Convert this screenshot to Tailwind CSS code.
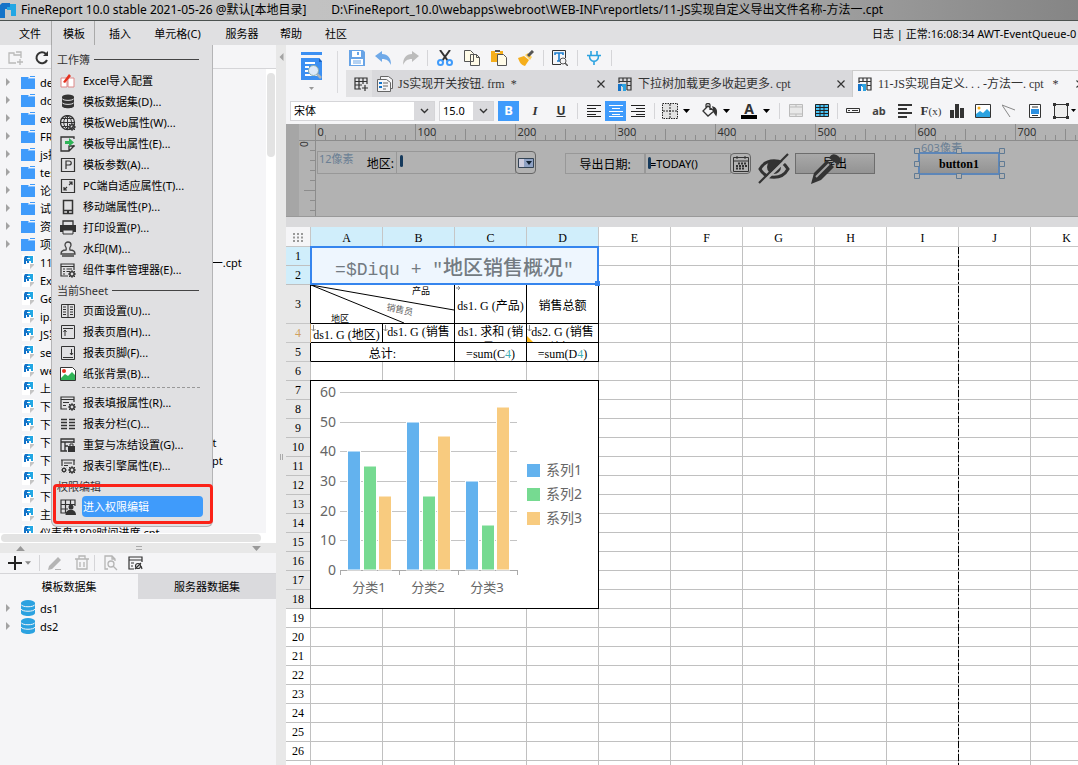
<!DOCTYPE html>
<html lang="zh-CN">
<head>
  <meta charset="UTF-8" />
  <meta name="viewport" content="width=device-width, initial-scale=1.0" />
  <title>FineReport 10.0</title>
  <script src="https://cdn.jsdelivr.net/npm/@tailwindcss/browser@4"></script>
</head>

<body class="h-screen flex flex-col overflow-hidden bg-[#f5f5f7] text-black text-[11px] leading-none font-['Noto_Sans','Noto_Sans_CJK_SC',sans-serif]">

  <!-- shared icons -->
  <svg class="hidden">
    <symbol id="folder" viewBox="0 0 14 13"><path d="M0 1h7l1 1h6v11H0z" fill="#3f9bfb"/><path d="M9 0h5v1H9z" fill="#3f9bfb"/><path d="M7 2.500h7" stroke="#bcdcff" stroke-width=".6"/></symbol>
    <symbol id="file" viewBox="0 0 13 14"><path d="M0 0h12v9l-4 5H0z" fill="#fff"/><path d="M12 9v1l-4 4v-5z" fill="#c4c4c4"/><path d="M3 1h4v7H5V6H4v3H2V3z" fill="#1473c8"/><path d="M6 1h5v7H9V6H6z" fill="#22a7e4"/><path d="M5 3h3v1H5z" fill="#fff"/></symbol>
    <symbol id="db" viewBox="0 0 14 16"><path d="M0 3v10c0 4 14 4 14 0V3z" fill="#2ba2e0"/><ellipse cx="7" cy="3" rx="7" ry="3" fill="#2ba2e0"/><path d="M0 4.500c1 3 13 3 14 0M0 9c1 3 13 3 14 0" fill="none" stroke="#f5f5f7"/></symbol>
    <symbol id="arrow" viewBox="0 0 4 8"><path d="M0 0l4 4-4 4z" fill="#a3a3a3"/></symbol>
    <symbol id="down" viewBox="0 0 7 4"><path d="M0 0h7L3.500 4z" fill="currentColor"/></symbol>
    <symbol id="chev" viewBox="0 0 9 6"><path d="M1 1l3.500 3.500L8 1" fill="none" stroke="#333" stroke-width="1.400"/></symbol>
    <symbol id="close" viewBox="0 0 8 8"><path d="M.5 .5l7 7M7.500 .5l-7 7" stroke="#333" stroke-width="1.200"/></symbol>
    <symbol id="cpt" viewBox="0 0 14 14"><path d="M1 6V1h12v12H9M1 4.500h12M5 1v4M9 1v12M9 8.500h4" fill="none" stroke="#333" stroke-width="1.200"/><path d="M0 7h5v2H3v5H0z" fill="#1473c8"/><path d="M4 7h4v7H5v-4H4z" fill="#2ba2e0"/></symbol>
    <symbol id="gear" viewBox="0 0 8 8"><circle cx="4" cy="4" r="2.200" fill="none" stroke="#333" stroke-width="1.600"/><path d="M4 0v1.500M4 6.500V8M0 4h1.500M6.500 4H8M1 1l1.200 1.200M5.800 5.800L7 7M7 1L5.800 2.200M2.200 5.800L1 7" stroke="#333"/></symbol>
  </svg>

  <!-- title bar -->
  <header class="h-[21px] shrink-0 flex items-center gap-[5px] text-[12px] border-b border-[#4c5250] bg-linear-to-r from-[#c9c9c9] via-[#bdbdbd] to-[#858585] whitespace-pre">
    <svg class="w-4 h-4" viewBox="0 0 16 16"><path d="M2 1h8v6H5v9H0V3z" fill="#1473c8"/><path d="M10 2h6v12h-5V8H7V5h3z" fill="#22a7e4"/></svg>
    <h1>FineReport 10.0 stable 2021-05-26 @默认[本地目录]        D:\FineReport_10.0\webapps\webroot\WEB-INF\reportlets/11-JS实现自定义导出文件名称-方法一.cpt</h1>
  </header>

  <!-- menu bar -->
  <nav class="h-6 shrink-0 flex items-center bg-[#e0e0e2]">
    <button class="h-6 pl-[19px] w-[51px] text-left">文件</button>
    <button class="h-6 w-11 pl-[2px] border-x border-[#aaa]">模板</button>
    <button class="h-6 w-[50px]">插入</button>
    <button class="h-6 w-[65px]">单元格(C)</button>
    <button class="h-6 w-[64px]">服务器</button>
    <button class="h-6 w-[34px]">帮助</button>
    <button class="h-6 w-[56px]">社区</button>
    <p class="ml-auto w-[206px] whitespace-nowrap">日志 | 正常:16:08:34 AWT-EventQueue-0</p>
  </nav>

  <main class="flex-1 min-h-0 flex relative">

    <!-- left side: template tree and data sets -->
    <aside class="w-[276px] shrink-0 flex flex-col">
      <div class="h-6 shrink-0 flex items-center gap-[10px] pl-2 pt-[2px] border-b border-[#d5d5d8]">
        <button aria-label="新建文件夹"><svg class="w-4 h-4" viewBox="0 0 16 16" fill="none" stroke="#b9b9b9" stroke-width="1.300"><path d="M8 13H1V3h5v2h7v3M8 2h5v3M12 9v6M9 12h6"/></svg></button>
        <button aria-label="刷新"><svg class="w-4 h-4" viewBox="0 0 16 16"><path d="M13 10a5.500 5.500 0 1 1-1-6" fill="none" stroke="#333" stroke-width="2"/><path d="M14 1v5H9z" fill="#333"/></svg></button>
      </div>
      <div class="h-[464px] shrink-0 flex">
        <ul id="tree" class="flex-1 min-w-0 pt-1 overflow-hidden whitespace-nowrap"></ul>
        <div class="w-[10px] bg-white pt-1"><div class="mx-px h-[84px] rounded bg-[#e3e3e3]"></div></div>
      </div>
      <div class="h-[10px] shrink-0 bg-white py-px pr-[15px] pl-px"><div class="h-2 rounded-full bg-[#e3e3e3]"></div></div>
      <div class="h-[10px] shrink-0 bg-[#e8e8e8] flex items-center justify-between pl-4 pr-[15px] text-[#999]">
        <svg class="w-[9px] h-[5px] rotate-180"><use href="#down"/></svg>
        <i class="w-[6px] h-1 border-y border-[#aaa]"></i>
        <svg class="w-[9px] h-[5px]"><use href="#down"/></svg>
      </div>
      <div class="h-[21px] shrink-0 flex items-center border-b border-[#d5d5d8]">
        <button class="pl-2 flex items-center gap-[3px] text-[#888]" aria-label="新增"><svg class="w-[14px] h-[14px]" viewBox="0 0 14 14"><path d="M7 0v14M0 7h14" stroke="#222" stroke-width="2"/></svg><svg class="w-[6px] h-1"><use href="#down"/></svg></button>
        <i class="ml-2 w-px h-4 bg-[#d5d5d8]"></i>
        <button class="w-[30px] grid place-items-center" aria-label="编辑"><svg class="w-4 h-4" viewBox="0 0 16 16"><path d="M2 11L11 2l3 3-9 9-4 1zM8 14h6v1H8z" fill="#b5b5b5"/></svg></button>
        <button class="w-[24px] grid place-items-center" aria-label="删除"><svg class="w-4 h-4" viewBox="0 0 16 16" fill="none" stroke="#b5b5b5" stroke-width="1.300"><path d="M1 4h14M3 4v10h10V4M5 4V1h6v3M6 7v5M10 7v5"/></svg></button>
        <i class="w-px h-4 bg-[#d5d5d8]"></i>
        <button class="w-[30px] grid place-items-center" aria-label="预览"><svg class="w-4 h-4" viewBox="0 0 16 16" fill="none" stroke="#b5b5b5" stroke-width="1.300"><path d="M6 14H3V1h7l3 3v2M10 1v3h3"/><circle cx="9" cy="9" r="3"/><path d="M11 11l4 4"/></svg></button>
        <button class="w-5 grid place-items-center" aria-label="连接"><svg class="w-[15px] h-[15px]" viewBox="0 0 15 15" fill="none" stroke="#333" stroke-width="1.200"><path d="M6 13H1V1h13v5M1 4h13M3 7h3M3 10h2"/><circle cx="10" cy="10" r="2.500"/><path d="M7 13l6-6M13 10l1 3"/></svg></button>
      </div>
      <div class="h-[25px] shrink-0 grid grid-cols-2 text-[11px]">
        <button>模板数据集</button>
        <button class="bg-[#dadadd]">服务器数据集</button>
      </div>
      <ul>
        <li class="h-[18px] flex items-center pl-[6px]"><svg class="w-1 h-2"><use href="#arrow"/></svg><svg class="ml-[11px] mr-[5px] w-[14px] h-4"><use href="#db"/></svg>ds1</li>
        <li class="h-[18px] flex items-center pl-[6px]"><svg class="w-1 h-2"><use href="#arrow"/></svg><svg class="ml-[11px] mr-[5px] w-[14px] h-4"><use href="#db"/></svg>ds2</li>
      </ul>
    </aside>

    <!-- splitter -->
    <div class="w-[10px] shrink-0 bg-[#e8e8e8] flex flex-col items-center pt-2">
      <svg class="w-[5px] h-2 rotate-180"><use href="#arrow"/></svg>
      <i class="mt-[393px] w-[3px] h-[6px] border-x border-[#aaa]"></i>
    </div>

    <!-- right side: designer -->
    <section class="flex-1 min-w-0 flex flex-col">
      <div class="h-[52px] shrink-0 flex">
        <button class="w-[51px] shrink-0 flex flex-col items-center pt-[7px] text-[#999]" aria-label="模板预览">
          <svg class="w-[22px] h-[30px]" viewBox="0 0 22 30"><path d="M0 0h21v3H0zM0 6h18l3 3v19H0z" fill="#3b8ff2"/><path d="M18 6l3 4h-3z" fill="#1c5fb8"/><path d="M4 11h10M4 15h4M4 19h3M4 23h12" stroke="#fff" stroke-width="2"/><circle cx="12.500" cy="18.500" r="5" fill="#dce9f8" stroke="#8aa"/><path d="M16 22l4 4" stroke="#a9b4bd" stroke-width="2.500"/></svg>
          <svg class="mt-[5px] w-[5px] h-[3px]"><use href="#down"/></svg>
        </button>
        <i class="w-px h-[42px] mt-[6px] bg-[#dadadd]"></i>
        <div class="flex-1 min-w-0 flex flex-col pl-2">
          <div class="h-[25px] flex items-center *:shrink-0">
            <button class="w-[22px] grid place-items-center" aria-label="保存"><svg class="w-4 h-4" viewBox="0 0 16 16"><path d="M0 0h14l2 2v14H0z" fill="#68a4e6"/><path d="M3 1h9v6H3z" fill="#fff"/><path d="M8 2h2v3H8z" fill="#68a4e6"/><path d="M2 9h12v6H2z" fill="#fff"/><path d="M4 11h8M4 13h8" stroke="#68a4e6"/></svg></button>
            <button class="w-[30px] grid place-items-center" aria-label="撤销"><svg class="w-4 h-[14px]" viewBox="0 0 16 14"><path d="M0 5l7-5v3c6 0 9 4 9 11-2-4-4-6-9-6v3z" fill="#6fa9e8"/></svg></button>
            <button class="w-[25px] grid place-items-center" aria-label="重做"><svg class="w-4 h-[14px]" viewBox="0 0 16 14"><path d="M16 5L9 0v3C3 3 0 7 0 14c2-4 4-6 9-6v3z" fill="#bcbcbc"/></svg></button>
            <i class="mx-1 w-px h-4 bg-[#d5d5d8]"></i>
            <button class="w-[26px] grid place-items-center" aria-label="剪切"><svg class="w-4 h-4" viewBox="0 0 16 16" fill="none"><path d="M3 0l8 11M13 0L5 11" stroke="#333" stroke-width="2"/><circle cx="3.500" cy="12.500" r="2.500" stroke="#3f9bfb" stroke-width="2"/><circle cx="12.500" cy="12.500" r="2.500" stroke="#3f9bfb" stroke-width="2"/></svg></button>
            <button class="w-[27px] grid place-items-center" aria-label="复制"><svg class="w-4 h-4" viewBox="0 0 16 16" fill="#fffbe8" stroke="#555"><path d="M.5 .5h6l3 3v8h-9zM6.500 4.500h6l3 3v8h-9z"/><path d="M12.500 4.500v3h3" fill="none"/></svg></button>
            <button class="w-[27px] grid place-items-center" aria-label="粘贴"><svg class="w-4 h-4" viewBox="0 0 16 16"><path d="M0 1h4v2h5V1h3v11H0z" fill="#f5ae1b"/><path d="M4 0h5v2H4z" fill="#555"/><path d="M6.500 4.500h6l3 3v8h-9z" fill="#fffbe8" stroke="#555"/></svg></button>
            <button class="w-[27px] grid place-items-center" aria-label="格式刷"><svg class="w-4 h-4" viewBox="0 0 16 16"><path d="M0 8l6-2 5 4-4 6c-4-1-5-3-7-8z" fill="#f5ae1b"/><path d="M7 5l5 5 2-3-4-4z" fill="#ffcf5a"/><path d="M10 6l5-5" stroke="#555" stroke-width="3"/></svg></button>
            <i class="ml-1 mr-[2px] w-px h-4 bg-[#d5d5d8]"></i>
            <button class="w-[28px] grid place-items-center" aria-label="查找"><svg class="w-4 h-4" viewBox="0 0 16 16" fill="none"><path d="M9 14.500H.5V.5h13V8" stroke="#333"/><path d="M3 5V3h8v2M7 3v8M5 11h3" stroke="#1e7fd0" stroke-width="1.600"/><circle cx="11" cy="11" r="3" fill="#f5f5f7" stroke="#555"/><path d="M13 13l3 3" stroke="#555" stroke-width="1.500"/></svg></button>
            <i class="ml-[3px] mr-[2px] w-px h-4 bg-[#d5d5d8]"></i>
            <button class="w-[28px] grid place-items-center" aria-label="插件"><svg class="w-[14px] h-[14px]" viewBox="0 0 14 14" fill="none" stroke="#2ba2e0" stroke-width="1.600"><path d="M4 0v4M10 0v4M0 4.500h14M2.500 5c0 7 9 7 9 0M7 10v4"/></svg></button>
            <i class="ml-[3px] w-px h-4 bg-[#d5d5d8]"></i>
          </div>
          <!-- open templates -->
          <div class="h-[27px] flex items-center bg-[#d9d9dc] whitespace-nowrap text-[12px] text-[#333] font-['Liberation_Serif','Noto_Sans_CJK_SC',serif] *:shrink-0">
            <button class="w-[26px] h-full grid place-items-center bg-[#e2e2e4]" aria-label="新建"><svg class="ml-1 w-[14px] h-[14px]" viewBox="0 0 14 14" fill="none" stroke="#333" stroke-width="1.200"><path d="M7 12H1V1h12v6M1 4.500h12M1 8h7M5 1v11M9 1v6M11 8v6M8 11h6"/></svg></button>
            <div class="w-[238px] h-full flex items-center pl-[5px] pr-[5px]">
              <svg class="mr-[5px] w-4 h-4" viewBox="0 0 16 16" fill="#f5f5f7" stroke="#666"><path d="M3.500 .5h8l4 3v9h-12z"/><path d="M.5 3.500h9l4 3v9H.5z"/><path d="M6 7h5M6 10h5M6 13h3"/><path d="M2 6h3v2H2zM2 10h3v2H2z" fill="#1473c8" stroke="none"/></svg>
              JS实现开关按钮.&nbsp;frm&nbsp; *
              <button class="ml-auto" aria-label="关闭"><svg class="w-2 h-2"><use href="#close"/></svg></button>
            </div>
            <div class="w-[242px] h-full flex items-center pl-2 pr-[7px]">
              <svg class="mr-[6px] w-[14px] h-[14px]"><use href="#cpt"/></svg>
              下拉树加载更多收起更多.&nbsp;cpt
              <button class="ml-auto" aria-label="关闭"><svg class="w-2 h-2"><use href="#close"/></svg></button>
            </div>
            <div class="w-[232px] h-full flex items-center pl-[5px] bg-[#f5f5f7] border-l border-t border-[#ccc]">
              <svg class="mr-[6px] w-[14px] h-[14px]"><use href="#cpt"/></svg>
              11-JS实现自定义. . . -方法一.&nbsp;cpt&nbsp;&nbsp; *
              <button class="ml-auto" aria-label="关闭"><svg class="w-2 h-2"><use href="#close"/></svg></button>
            </div>
          </div>
        </div>
      </div>

      <!-- format bar -->
      <div class="h-[27px] shrink-0 flex items-center pl-1 *:shrink-0">
        <label class="relative flex w-[145px] h-5 border border-[#d5d5d8] bg-white" aria-label="字体">
          <select class="w-full pl-[3px] pr-5 appearance-none bg-transparent"><option>宋体</option></select>
          <span class="absolute right-0 inset-y-0 w-5 grid place-items-center bg-[#dadadd] pointer-events-none"><svg class="w-[9px] h-[6px]"><use href="#chev"/></svg></span>
        </label>
        <label class="relative ml-1 flex w-[55px] h-5 border border-[#d5d5d8] bg-white" aria-label="字号">
          <select class="w-full pl-[3px] pr-5 appearance-none bg-transparent"><option>15.0</option></select>
          <span class="absolute right-0 inset-y-0 w-5 grid place-items-center bg-[#dadadd] pointer-events-none"><svg class="w-[9px] h-[6px]"><use href="#chev"/></svg></span>
        </label>
        <button class="ml-1 w-[21px] h-5 bg-[#3f9bfb] text-white font-bold text-[13px]">B</button>
        <button class="ml-[3px] w-[26px] font-bold italic text-[13px] text-[#333] font-['Liberation_Serif',serif]">I</button>
        <button class="w-[26px] font-bold underline text-[12px] text-[#333]">U</button>
        <i class="ml-[3px] mr-[5px] w-px h-4 bg-[#d5d5d8]"></i>
        <button class="w-[22px] grid place-items-center" aria-label="左对齐"><svg class="w-[14px] h-3" viewBox="0 0 14 12" stroke="#222"><path d="M0 .5h14M0 3.500h9M0 6.500h14M0 9.500h9M0 11.500h14"/></svg></button>
        <button class="w-[21px] h-5 bg-[#3f9bfb] grid place-items-center" aria-label="居中"><svg class="w-[14px] h-3" viewBox="0 0 14 12" stroke="#fff"><path d="M0 .5h14M3 3.500h8M0 6.500h14M3 9.500h8M0 11.500h14"/></svg></button>
        <button class="w-[23px] grid place-items-center" aria-label="右对齐"><svg class="w-[14px] h-3" viewBox="0 0 14 12" stroke="#222"><path d="M0 .5h14M5 3.500h9M0 6.500h14M5 9.500h9M0 11.500h14"/></svg></button>
        <i class="ml-[5px] mr-[7px] w-px h-4 bg-[#d5d5d8]"></i>
        <button class="flex items-center gap-[5px]" aria-label="边框"><svg class="w-4 h-4" viewBox="0 0 16 16"><path d="M.5 .5h15v15H.5z" fill="#e3e3e3" stroke="#222" stroke-dasharray="1.500 1"/><path d="M8 1v14M1 8h14" stroke="#222" stroke-dasharray="2 1"/></svg><svg class="w-[7px] h-1"><use href="#down"/></svg></button>
        <button class="ml-3 flex items-center gap-[5px]" aria-label="填充色"><svg class="w-4 h-4" viewBox="0 0 16 16" fill="none" stroke="#333" stroke-width="1.300"><path d="M6 3l6 5-6 5-5-5zM4 6V2c0-2 4-2 4 0v5"/><path d="M11 4c3 1 4 4 3 8l-2-3z" fill="#333"/></svg><svg class="w-[7px] h-1"><use href="#down"/></svg></button>
        <button class="ml-[11px] flex items-center gap-[6px]" aria-label="字体颜色"><span class="w-4 h-4 border-b-4 border-black text-[14px] leading-[11px] font-bold text-[#333]">A</span><svg class="w-[7px] h-1"><use href="#down"/></svg></button>
        <i class="ml-[9px] mr-[2px] w-px h-4 bg-[#d5d5d8]"></i>
        <button class="w-[27px] grid place-items-center" aria-label="合并"><svg class="w-[14px] h-[13px]" viewBox="0 0 14 13" fill="#e8e8e8" stroke="#bbb"><path d="M.5 .5h13v12H.5zM.5 3h13M.5 10h13M7 .5V3M7 10v2.500"/></svg></button>
        <button class="w-[26px] grid place-items-center" aria-label="表格"><svg class="w-[14px] h-[13px]" viewBox="0 0 14 13"><path d="M0 0h14v13H0z" fill="#49c3f5"/><path d="M.5 .5h13v12H.5zM0 3.500h14M0 6.500h14M0 9.500h14M5 0v13M9 0v13" fill="none" stroke="#222"/></svg></button>
        <i class="ml-[2px] mr-[2px] w-px h-4 bg-[#d5d5d8]"></i>
        <button class="w-[26px] grid place-items-center" aria-label="文本框"><svg class="w-[14px] h-[5px]" viewBox="0 0 14 5" fill="none" stroke="#333"><path d="M.5 .5h13v4H.5zM2 2.500h2M6 2.500h6"/></svg></button>
        <button class="w-[26px] font-bold text-[#444]">ab</button>
        <button class="w-[26px] grid place-items-center" aria-label="富文本"><svg class="w-[14px] h-[14px]" viewBox="0 0 14 14" stroke="#333" stroke-width="2"><path d="M0 1h14M0 5h9M0 9h14M0 13h9"/></svg></button>
        <button class="w-[26px] text-[#333] font-['Liberation_Serif',serif]"><b class="text-[13px]">F</b>(x)</button>
        <button class="w-[26px] grid place-items-center" aria-label="图表"><svg class="w-[14px] h-[14px]" viewBox="0 0 14 14" fill="#333"><path d="M0 6h4v8H0zM5 0h4v14H5zM10 4h4v10h-4z"/></svg></button>
        <button class="w-[26px] grid place-items-center" aria-label="图片"><svg class="w-4 h-[14px]" viewBox="0 0 16 14"><path d="M.5 .5h15v13H.5z" fill="#fff" stroke="#333"/><path d="M1 10l4-3 3 2 4-4 3 3v5H1z" fill="#2ba2e0"/><circle cx="4" cy="4" r="1.500" fill="#f5ae1b"/></svg></button>
        <button class="w-[26px] grid place-items-center" aria-label="斜线"><svg class="w-[14px] h-[14px]" viewBox="0 0 14 14" fill="none" stroke="#888"><path d="M0 1l13 5M0 1l8 12"/></svg></button>
        <button class="w-[26px] grid place-items-center" aria-label="子报表"><svg class="w-3 h-[14px]" viewBox="0 0 12 14"><path d="M.5 .5h11v13H.5z" fill="#fff" stroke="#333"/><path d="M3 3h6M3 11.500h6" stroke="#333"/><path d="M2 5h8v5H2z" fill="#2b8fe0"/></svg></button>
        <button class="w-[26px] pl-[5px] flex items-center gap-[2px]" aria-label="形状"><svg class="w-4 h-4 shrink-0" viewBox="0 0 16 16"><path d="M1.500 1.500h13v13h-13z" fill="#eee" stroke="#333"/><path d="M0 0h3v3H0zM13 0h3v3h-3zM0 13h3v3H0zM13 13h3v3h-3z" fill="#333"/></svg><svg class="w-[5px] h-[3px] shrink-0"><use href="#down"/></svg></button>
      </div>

      <!-- parameter pane, greyed out -->
      <div class="h-[93px] shrink-0 relative flex bg-[#b2b2b2] border-b border-[#999] overflow-hidden">
        <div class="w-[13px] bg-[#a6a6a6]"></div>
        <svg class="flex-1 h-full" id="ruler"></svg>
        <div class="absolute left-[31px] top-[27px] w-[80px] h-[23px] border border-[#989898] flex justify-end items-center pr-[2px] pt-[3px] text-[12px]">地区:</div>
        <span class="absolute left-[33px] top-[29px] text-[11px] text-[#6a7f94]">12像素</span>
        <div class="absolute left-[110px] top-[27px] w-[120px] h-[23px] border border-[#989898]"><i class="absolute left-[3px] top-[3px] w-[3px] h-3 rounded-sm bg-[#163a5c]"></i></div>
        <button class="absolute left-[229px] top-[27px] w-[21px] h-[23px] border border-[#666] rounded-sm grid place-items-center" aria-label="下拉"><svg class="w-4 h-[10px]" viewBox="0 0 16 10"><path d="M.5 .5h15v9H.5z" fill="#8fa2c4" stroke="#345"/><path d="M1 1h5v8H1z" fill="#ccd"/><path d="M8 3h6l-3 4z" fill="#123"/></svg></button>
        <div class="absolute left-[279px] top-[29px] w-[80px] h-[21px] border border-[#989898] grid place-items-center pt-[3px] text-[12px]">导出日期:</div>
        <div class="absolute left-[359px] top-[29px] w-[86px] h-[21px] border border-[#989898] flex items-center pl-1">=TODAY()<i class="absolute left-[2px] top-[3px] w-[3px] h-3 rounded-sm bg-[#163a5c]"></i></div>
        <button class="absolute left-[444px] top-[29px] w-[21px] h-[21px] border border-[#666] rounded-sm grid place-items-center" aria-label="日历"><svg class="w-4 h-4" viewBox="0 0 16 16" fill="none" stroke="#333"><path d="M.5 1.500h15v14H.5zM.5 5h15M4 0v3M12 0v3"/><path d="M5 7.500h9M3 10h11M3 12.500h8" stroke-width="2" stroke-dasharray="2 1"/></svg></button>
        <button class="absolute left-[509px] top-[29px] w-[80px] h-[21px] border border-[#6d6d6d] bg-linear-to-b from-[#a9a9a9] to-[#939393] text-[12px]">导出</button>
        <svg class="absolute left-[472px] top-[29px] w-8 h-8" viewBox="0 0 32 32"><path d="M2 16C8 5 24 5 30 16 24 27 8 27 2 16z" fill="none" stroke="#333" stroke-width="3"/><circle cx="16" cy="14" r="7" fill="#333"/><path d="M2 32L32 3" stroke="#b2b2b2" stroke-width="3"/><path d="M1 30L30 1" stroke="#333" stroke-width="2.200"/></svg>
        <svg class="absolute left-[524px] top-[29px] w-8 h-8" viewBox="0 0 32 32"><path d="M1 31l3-11L17 7l7 7L11 27z" fill="#333"/><path d="M19 5c3-5 6-4 9-2s4 5 0 9z" fill="#333"/><path d="M6 24L19 11" stroke="#a2a2a2" stroke-width="2"/></svg>
        <span class="absolute left-[635px] top-[18px] text-[11px] text-[#6a7f94]">603像素</span>
        <button class="absolute left-[632px] top-[28px] w-[82px] h-[23px] border-2 border-[#5d86b8] bg-linear-to-b from-[#aaa] to-[#939393] text-[12px] font-bold font-['Liberation_Serif',serif]">button1</button>
        <!-- resize handles -->
        <svg class="absolute left-[628px] top-[24px] w-[91px] h-[31px]" fill="#b2b2b2" stroke="#5f7a94"><path d="M.5 .5h5v5h-5zM42.500 .5h5v5h-5zM85.500 .5h5v5h-5zM.5 13.500h5v5h-5zM85.500 13.500h5v5h-5zM.5 25.500h5v5h-5zM42.500 25.500h5v5h-5zM85.500 25.500h5v5h-5z"/></svg>
      </div>
      <div class="h-[10px] shrink-0 bg-[#dadadc]"></div>

      <!-- report sheet -->
      <div class="flex-1 min-h-0 relative overflow-hidden bg-white">
        <table class="w-[817px] table-fixed border-separate border-spacing-0 text-center text-[12px] font-['Liberation_Serif','Noto_Sans_CJK_SC',serif]">
          <colgroup><col class="w-[25px]" /><col span="11" class="w-[72px]" /></colgroup>
          <thead>
            <tr class="h-5 *:p-0 *:pt-[2px] *:border-r *:border-b *:border-[#c6c6c6]" id="cols">
              <th class="bg-[#f5f5f7]"><svg class="mx-auto w-3 h-[9px]" stroke="#999" stroke-width="2" stroke-dasharray="2 2"><path d="M1 1h11M1 4.500h11M1 8h11"/></svg></th>
            </tr>
          </thead>
          <tbody id="rows">
            <tr class="h-[19px] *:p-0 *:border-r *:border-b *:border-[#c0c0c0]">
              <th class="font-normal bg-[#d0eefb]">1</th>
              <td colspan="4" rowspan="2" class="relative bg-[#eef6fe] text-[20px] font-medium text-[#737b82] whitespace-nowrap"><div class="pt-[6px]"><span class="font-['Liberation_Mono',monospace] text-[18px]">=$Diqu + "</span>地区销售概况<span class="font-['Liberation_Mono',monospace] text-[18px]">"</span></div><i class="absolute -left-px -top-px -right-px -bottom-px border-2 border-[#3585ee]"></i><i class="absolute -right-[2px] -bottom-[2px] w-[5px] h-[5px] bg-[#3585ee]"></i></td>
              <td></td><td></td><td></td><td></td><td></td><td></td><td></td>
            </tr>
            <tr class="h-[19px] *:p-0 *:border-r *:border-b *:border-[#c0c0c0]">
              <th class="font-normal bg-[#d0eefb]">2</th>
              <td></td><td></td><td></td><td></td><td></td><td></td><td></td>
            </tr>
            <tr class="h-[39px] *:p-0 *:border-r *:border-b">
              <th class="font-normal bg-[#e8e8e8] border-b-[#c6c6c6]">3</th>
              <td colspan="2">
                <svg class="block w-[143px] h-[38px] font-['Noto_Sans_CJK_SC',sans-serif]" font-size="9"><path d="M0 0l143 25M0 0l93 38" stroke="#000"/><text x="101" y="9">产品</text><text x="75" y="25" fill="#666" transform="rotate(12 75 25)">销售员</text><text x="20" y="37">地区</text></svg>
              </td>
              <td class="whitespace-nowrap"><div class="pt-1">ds1. G (产品)</div></td>
              <td><div class="pt-1">销售总额</div></td>
              <td class="border-[#c0c0c0]"></td><td class="border-[#c0c0c0]"></td><td class="border-[#c0c0c0]"></td><td class="border-[#c0c0c0]"></td><td class="border-[#c0c0c0]"></td><td class="border-[#c0c0c0]"></td><td class="border-[#c0c0c0]"></td>
            </tr>
            <tr class="h-[19px] *:p-0 *:border-r *:border-b">
              <th class="font-normal bg-[#e8e8e8] border-b-[#c6c6c6] text-[#d0a060]">4</th>
              <td><div class="h-[18px] overflow-hidden leading-[22px] whitespace-nowrap">ds1. G (地区)</div></td>
              <td><div class="h-[18px] overflow-hidden leading-4 whitespace-nowrap">ds1. G (销售<br />员)</div></td>
              <td><div class="h-[18px] overflow-hidden leading-4 whitespace-nowrap">ds1. 求和 (销<br />量)</div></td>
              <td class="relative"><div class="h-[18px] overflow-hidden leading-4 whitespace-nowrap">ds2. G (销售<br />总额)</div><svg class="absolute left-0 bottom-0 w-[6px] h-[6px]" fill="#fdb813"><path d="M0 0l6 6H0z"/></svg></td>
              <td class="border-[#c0c0c0]"></td><td class="border-[#c0c0c0]"></td><td class="border-[#c0c0c0]"></td><td class="border-[#c0c0c0]"></td><td class="border-[#c0c0c0]"></td><td class="border-[#c0c0c0]"></td><td class="border-[#c0c0c0]"></td>
            </tr>
            <tr class="h-[19px] *:p-0 *:border-r *:border-b">
              <th class="font-normal bg-[#e8e8e8] border-b-[#c6c6c6]">5</th>
              <td colspan="2"><div class="pt-1">总计:</div></td>
              <td><div class="pt-1">=sum(C<span class="text-[#3fb0b8]">4</span>)</div></td>
              <td><div class="pt-1">=sum(D<span class="text-[#3fb0b8]">4</span>)</div></td>
              <td class="border-[#c0c0c0]"></td><td class="border-[#c0c0c0]"></td><td class="border-[#c0c0c0]"></td><td class="border-[#c0c0c0]"></td><td class="border-[#c0c0c0]"></td><td class="border-[#c0c0c0]"></td><td class="border-[#c0c0c0]"></td>
            </tr>
          </tbody>
        </table>

        <!-- expansion marks of the data columns -->
        <svg class="absolute left-[25px] top-[58px] w-[290px] h-[50px]" fill="none" stroke="#888"><path d="M145 3h4M147 1l2 2-2 2M2.500 40v6M.5 44l2 2 2-2M74.500 40v6M72.500 44l2 2 2-2M218.500 40v6M216.500 44l2 2 2-2"/></svg>

        <!-- page break -->
        <svg class="absolute left-[672px] top-5 w-px h-full"><path d="M.5 0v2000" stroke="#000" stroke-dasharray="7 2 2 2"/></svg>

        <!-- floating chart -->
        <figure class="absolute left-6 top-[153px] w-[289px] h-[229px] border border-black bg-white">
          <svg id="chart" class="block w-full h-full font-['Noto_Sans','Noto_Sans_CJK_SC',sans-serif]" fill="#666" font-size="14"></svg>
        </figure>
      </div>
    </section>

    <!-- 模板 menu -->
    <div id="menu" class="absolute left-[51px] top-0 w-[162px] h-[482px] pt-1 pl-1 bg-[#e0e0e2] border border-t-0 border-[#b4b4b6] rounded-b-md whitespace-nowrap"></div>
    <div class="absolute left-[53px] top-[439px] w-[160px] h-10 border-3 border-[#fb2218] rounded-sm pointer-events-none"></div>
  </main>

  <script>
    // template tree
    const folders = ['demo', 'doc', 'export', 'FR', 'js接口', 'test', '论坛', '试用', '资料', '项目'];
    const files = ['11-JS实现自定义导出文件名称-方法一.cpt', 'Excel.cpt', 'Gettingstarted.cpt', 'ip.cpt', 'JS实现.frm', 'search.cpt', 'web.cpt', '上报.cpt',
      '下拉框.cpt', '下拉树.cpt', '下拉树加载更多收起更多-方法一.cpt', '下拉树加载更多收起更多-方法一1.cpt', '下钻.cpt', '下载.cpt', '主表.cpt', '仪表盘180°时间进度.cpt'];
    document.getElementById('tree').innerHTML =
      folders.map(n => `<li class="h-[18px] flex items-center pl-[6px]"><svg class="w-1 h-2 shrink-0"><use href="#arrow"/></svg><svg class="ml-[11px] mr-[5px] w-[14px] h-[13px] shrink-0"><use href="#folder"/></svg>${n}</li>`).join('') +
      files.map(n => `<li class="h-[18px] flex items-center pl-[22px]"><svg class="mr-[5px] w-[13px] h-[14px] shrink-0"><use href="#file"/></svg>${n}</li>`).join('');

    // menu entries: [label, icon]; a string is a group heading, null a divider
    const gear = '<use href="#gear" x="8" y="8" width="8" height="8"/>';
    const entries = [
      '工作簿',
      ['Excel导入配置', '<path d="M1 5h6v9H1zM8 5h6v9H8z" fill="#fff" stroke="#d88"/><path d="M3 9l6-8 2 2-6 7z" fill="#e5321f"/>'],
      ['模板数据集(D)...', '<path d="M2 3v9c0 3 12 3 12 0V3z" fill="#333"/><ellipse cx="8" cy="3" rx="6" ry="2.500" fill="#333"/><path d="M2 4.500c1 2.500 11 2.500 12 0M2 8.500c1 2.500 11 2.500 12 0" stroke="#e0e0e2"/>'],
      ['模板Web属性(W)...', '<circle cx="7.500" cy="7.500" r="7" stroke="#333" stroke-width="1.300"/><path d="M.5 7.500h14M2 3.500h11M2 11.500h7M7.500 .5v14M7.500 .5c-5 4-5 10 0 14M7.500 .5c4 3 4 6 4 8" stroke="#333"/>' + gear],
      ['模板导出属性(E)...', '<path d="M14 9v2M14 3V1H1v14h8l5-5M9 15v-5h5" stroke="#333" stroke-width="1.300"/><path d="M5 5h4V2l5 4.500-5 4V8H5z" fill="#2fb457"/>'],
      ['模板参数(A)...', '<path d="M1.500 1.500h13v13h-13zM6 12V4h3c3 0 3 4 0 4H6" stroke="#333" stroke-width="1.200"/>'],
      ['PC端自适应属性(T)...', '<path d="M1.500 1.500h13v13h-13zM9 7l3-3M9 4h3v3M7 9l-3 3M4 9v3h3" stroke="#333" stroke-width="1.200"/>'],
      ['移动端属性(P)...', '<path d="M3.500 1.500h9v13h-9zM3 11.500h10" stroke="#333" stroke-width="1.500"/><path d="M7 12h2v2H7z" fill="#333"/>'],
      ['打印设置(P)...', '<path d="M3 5V1h10v4" stroke="#333" stroke-width="1.300"/><path d="M0 5h16v7H0z" fill="#333"/><path d="M3 10h10v4H3z" fill="#e0e0e2" stroke="#333"/>'],
      ['水印(M)...', '<path d="M6 9c1-3-1-3-1-5 0-4 6-4 6 0 0 2-2 2-1 5 3 0 5 1 5 4H1c0-3 2-4 5-4zM2 15h12" stroke="#444" stroke-width="1.300"/>'],
      ['组件事件管理器(E)...', '<path d="M8 14H1V2h13v6M1 4.500h13M3 7h2M6.500 7H12M3 9.500h2M6.500 9.500H9M3 12h2" stroke="#333" stroke-width="1.200"/>' + gear],
      '当前Sheet',
      ['页面设置(U)...', '<path d="M1.500 1.500h13v13h-13zM8 1v14M3 4h3M3 6.500h3M3 9h3M3 11.500h3M10 4h3M10 6.500h3M10 9h3M10 11.500h3" stroke="#333"/>'],
      ['报表页眉(H)...', '<path d="M1.500 1.500h13v13h-13zM3 4.500h10M5 12V6M3.500 8L5 6l1.500 2" stroke="#333"/>'],
      ['报表页脚(F)...', '<path d="M1.500 1.500h13v13h-13zM3 12.500h10M11.500 4v6M10 8l1.500 2L13 8" stroke="#333"/>'],
      ['纸张背景(B)...', '<path d="M.5 1.500h12l3 3v10H.5z" fill="#fff" stroke="#333"/><path d="M1 12l4-4 3 2 4-4 3 3v5H1z" fill="#2fb457"/><circle cx="4" cy="5" r="2" fill="#e5321f"/>'],
      null,
      ['报表填报属性(R)...', '<path d="M7 14H1V2h13v5M1 4.500h13M3 7.500h6M3 10.500h3" stroke="#333" stroke-width="1.200"/>' + gear],
      ['报表分栏(C)...', '<path d="M1 3.500h6M1 6.500h6M1 9.500h6M1 12.500h6M9 3.500h6M9 6.500h6M9 9.500h6M9 12.500h6" stroke="#333" stroke-width="1.300"/>'],
      ['重复与冻结设置(G)...', '<path d="M7 14H1V2h13v4M1 5h13M5 5v9M5 9h3" stroke="#333" stroke-width="1.300"/><path d="M8 9h7v6H8z" fill="#333"/><path d="M10 9V7h3v2" stroke="#333"/>'],
      ['报表引擎属性(E)...', '<path d="M2 8V2h12v5M1 2h14M4 5h8M4 7.500h4" stroke="#333" stroke-width="1.200"/><use href="#gear" x="1" y="9" width="6" height="6"/>' + gear],
      '权限编辑',
      ['进入权限编辑', '<path d="M8 14H1V1h14v6M1 5.500h14M1 10h7M5.500 1v13M10.500 1v5" stroke="#333" stroke-width="1.200"/><circle cx="11" cy="8" r="2.500" fill="#333"/><path d="M5.500 16c0-7 10.500-7 10.500 0z" fill="#333"/>']
    ];
    document.getElementById('menu').innerHTML = entries.map((e, i) => {
      if (e === null) return '<div class="h-2 ml-[26px] mr-3 pt-[3px]"><hr class="border-t border-dashed border-[#999]" /></div>';
      if (typeof e === 'string') return `<div class="${i ? 'h-5' : 'h-[21px]'} pl-px pr-[13px] flex items-center gap-1 text-[#333]">${e}<i class="flex-1 h-px bg-[#444]"></i></div>`;
      const on = i === entries.length - 1;
      return `<button class="flex items-center h-[21px] w-full pl-1 pr-[9px] text-left"><svg class="w-4 h-4 mr-[6px] shrink-0" viewBox="0 0 16 16" fill="none">${e[1]}</svg><span class="pl-px ${on ? 'flex-1 h-[21px] leading-[21px] rounded bg-[#3f9bfb] text-white' : ''}">${e[0]}</span></button>`;
    }).join('');

    // ruler, one tick each 10px
    let r = '<path d="M0 16.500h2000M16.500 0v93" stroke="#8c8c8c"/>';
    for (let i = 0; i < 78; i++) {
      const x = 16.5 + i * 10;
      r += `<path d="M${x} ${i % 10 ? (i % 5 ? 11 : 5) : 0}V16" stroke="#8c8c8c"/>`;
      if (i % 10 === 0) r += `<text x="${x + 2}" y="12" font-size="11" fill="#333">${i * 10}</text>`;
      if (i && i < 8) r += `<path d="M${i % 5 ? 11 : 5} ${16.5 + i * 10}H16" stroke="#8c8c8c"/>`;
    }
    r += '<text transform="translate(9 23) rotate(-90)" font-size="10" fill="#333">0</text>';
    document.getElementById('ruler').innerHTML = r;

    // sheet headers and empty rows
    document.getElementById('cols').insertAdjacentHTML('beforeend',
      [...'ABCDEFGHIJK'].map((c, i) => `<th class="font-normal ${i < 4 ? 'bg-[#d0eefb]' : 'bg-white'}">${c}</th>`).join(''));
    let rows = '';
    for (let n = 6; n <= 27; n++) {
      rows += `<tr class="h-[19px] *:p-0 *:border-r *:border-b *:border-[#c0c0c0]"><th class="font-normal ${n < 19 ? 'bg-[#e8e8e8]' : 'bg-white'}">${n}</th>${'<td></td>'.repeat(11)}</tr>`;
    }
    document.getElementById('rows').insertAdjacentHTML('beforeend', rows);

    // chart
    const data = [[40, 35, 25], [50, 25, 45], [30, 15, 55]];
    const colors = ['#63b2ee', '#76da91', '#f8cb7f'];
    let c = '';
    for (let v = 0; v <= 60; v += 10) {
      const y = Math.round(189 - v * 2.967) + .5;
      c += `<path d="M29 ${y}h177" stroke="${v ? '#c4c4c4' : '#aaa'}"/><text x="25" y="${y + 4}" text-anchor="end">${v}</text>`;
    }
    data.forEach((set, g) => {
      set.forEach((v, i) => {
        const h = Math.round(v * 2.967);
        c += `<rect x="${36.5 + g * 59 + Math.round(i * 15.5)}" y="${189 - h}" width="13" height="${h}" fill="${colors[i]}" stroke="#fff" stroke-width="1"/>`;
      });
      c += `<text x="${58 + g * 59}" y="211" font-size="13" text-anchor="middle">分类${g + 1}</text>`;
      c += `<rect x="216" y="${83 + g * 24}" width="13" height="13" fill="${colors[g]}"/><text x="235" y="${94 + g * 24}">系列${g + 1}</text>`;
    });
    for (let i = 0; i < 4; i++) c += `<path d="M${29.5 + i * 59} 189v5" stroke="#aaa"/>`;
    document.getElementById('chart').innerHTML = c;
  </script>
</body>
</html>
